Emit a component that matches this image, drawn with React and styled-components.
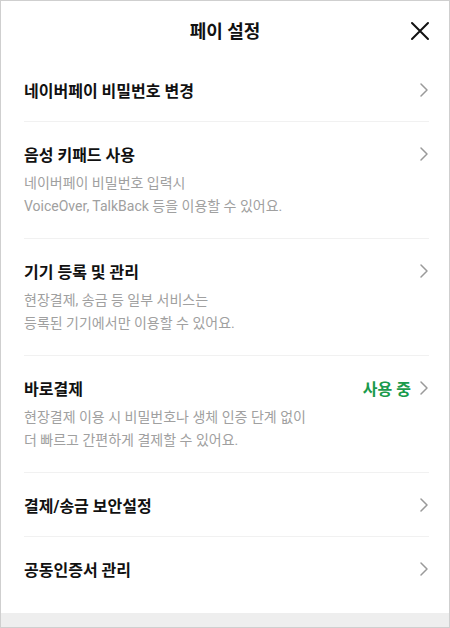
import React from "react";
import styled, { createGlobalStyle } from "styled-components";

const GlobalStyle = createGlobalStyle`
  html, body {
    margin: 0;
    padding: 0;
    background: #fff;
  }
  body {
    font-family: Roboto, "Noto Sans CJK KR", sans-serif;
    -webkit-font-smoothing: antialiased;
  }
`;

const Frame = styled.div`
  width: 450px;
  height: 628px;
  box-sizing: border-box;
  border: 1px solid #cfcfcf;
  display: flex;
  flex-direction: column;
  background: #fff;
  overflow: hidden;
`;

const Header = styled.header`
  height: 57px;
  flex-shrink: 0;
  position: relative;
  display: flex;
  align-items: center;
  justify-content: center;
`;

const Title = styled.h1`
  margin: 0;
  font-size: 18px;
  font-weight: 700;
  color: #111;
`;

const CloseButton = styled.button`
  position: absolute;
  right: 18px;
  top: 19px;
  width: 22px;
  height: 22px;
  padding: 0;
  border: 0;
  background: none;
  display: flex;
  align-items: center;
  justify-content: center;
`;

const List = styled.ul`
  list-style: none;
  margin: 0;
  padding: 0;
  flex: 1;
`;

const Item = styled.li`
  display: flex;
  flex-direction: column;
  justify-content: ${(p) => (p.$desc ? "flex-start" : "center")};
  min-height: ${(p) => (p.$desc ? "auto" : "64px")};
  padding: ${(p) => (p.$desc ? "21px 0 20px" : "0")};
  margin: 0 20px 0 23px;
  border-bottom: ${(p) => (p.$last ? "none" : "1px solid #f1f1f1")};
  box-sizing: border-box;
`;

const Row = styled.div`
  display: flex;
  align-items: center;
  height: 22px;
`;

const Label = styled.span`
  flex: 1;
  font-size: 16px;
  font-weight: 700;
  color: #111;
`;

const Status = styled.span`
  font-size: 16px;
  font-weight: 700;
  color: #1a9a4b;
  margin-right: 8px;
`;

const Desc = styled.p`
  margin: 7px 0 0;
  font-size: 14px;
  line-height: 23px;
  color: #a0a0a0;
`;

const Bottom = styled.div`
  height: 14px;
  flex-shrink: 0;
  background: #eeeeee;
`;

const Chevron = () => (
  <svg width="10" height="16" viewBox="0 0 10 16" fill="none">
    <path d="M2 2l6 6-6 6" stroke="#9a9a9a" strokeWidth="1.5" strokeLinecap="round" strokeLinejoin="round" />
  </svg>
);

const items = [
  { label: "네이버페이 비밀번호 변경" },
  {
    label: "음성 키패드 사용",
    desc: ["네이버페이 비밀번호 입력시", "VoiceOver, TalkBack 등을 이용할 수 있어요."],
  },
  {
    label: "기기 등록 및 관리",
    desc: ["현장결제, 송금 등 일부 서비스는", "등록된 기기에서만 이용할 수 있어요."],
  },
  {
    label: "바로결제",
    status: "사용 중",
    desc: ["현장결제 이용 시 비밀번호나 생체 인증 단계 없이", "더 빠르고 간편하게 결제할 수 있어요."],
  },
  { label: "결제/송금 보안설정" },
  { label: "공동인증서 관리" },
];

export default function App() {
  return (
    <>
      <GlobalStyle />
      <Frame>
        <Header>
          <Title>페이 설정</Title>
          <CloseButton aria-label="닫기">
            <svg width="20" height="20" viewBox="0 0 20 20">
              <path d="M2 2l16 16M18 2L2 18" stroke="#111" strokeWidth="2" strokeLinecap="round" />
            </svg>
          </CloseButton>
        </Header>
        <List>
          {items.map((item, i) => (
            <Item key={item.label} $desc={!!item.desc} $last={i === items.length - 1}>
              <Row>
                <Label>{item.label}</Label>
                {item.status && <Status>{item.status}</Status>}
                <Chevron />
              </Row>
              {item.desc && (
                <Desc>
                  {item.desc[0]}
                  <br />
                  {item.desc[1]}
                </Desc>
              )}
            </Item>
          ))}
        </List>
        <Bottom />
      </Frame>
    </>
  );
}
